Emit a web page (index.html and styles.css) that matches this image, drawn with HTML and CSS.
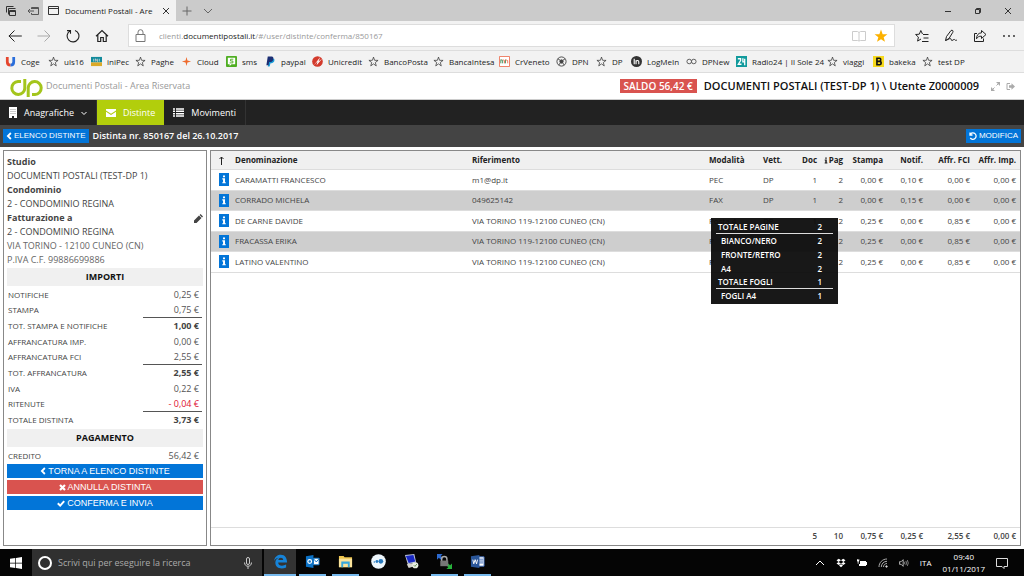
FILE: index.html
```html
<!DOCTYPE html>
<html lang="it">
<head>
<meta charset="utf-8">
<title>Documenti Postali - Area Riservata</title>
<meta name="viewport" content="width=device-width, initial-scale=1">
<link rel="stylesheet" href="styles.css">
</head>
<body>
<svg class="defs" aria-hidden="true">
  <symbol id="star" viewBox="0 0 12 12"><path d="M6 1.2 7.2 4.7 11 4.8 8 7.1 9 10.8 6 8.6 3 10.8 4 7.1 1 4.8 4.8 4.7Z" fill="none" stroke="#333" stroke-width=".8"/></symbol>
  <symbol id="info" viewBox="0 0 10 14"><path fill="currentColor" d="M3.7 2h2.6v2.2H3.7zM2.8 5.4h3.5v5h1v1.5H2.8v-1.5h1V6.9h-1z"/></symbol>
  <symbol id="chevron-left" viewBox="0 0 8 10"><path d="M6.500 1 2.500 5l4 4" fill="none" stroke="currentColor" stroke-width="2.400"/></symbol>
</svg>

<header class="browser">
  <div class="titlebar">
    <div class="tab-tools">
      <button class="icon-btn" aria-label="Schede accantonate"><svg width="12" height="12" viewBox="0 0 12 12" fill="none" stroke="#333"><path d="M1.5 7.500v-6h7M3.500 9.500v-6h7"/><path d="M4.500 5.500h6v5h-6zM4.500 6.500h6"/></svg></button>
      <button class="icon-btn" aria-label="Accantona schede"><svg width="12" height="12" viewBox="0 0 12 12" fill="none" stroke="#555"><path d="M4.500 4V2.500h7v7h-7V8M4.500 3.500h7M1 6h6M3 4 1 6l2 2"/></svg></button>
    </div>
    <div class="tab">
      <svg width="12" height="10" viewBox="0 0 12 10" fill="none" stroke="#333"><path d="M.5.500h10v8H.5zM.5 2.500h10"/></svg>
      <span class="tab-title">Documenti Postali - Are</span>
      <button class="icon-btn" aria-label="Chiudi scheda"><svg width="8" height="8" viewBox="0 0 8 8" stroke="#333"><path d="m1 1 6 6M7 1 1 7"/></svg></button>
    </div>
    <button class="icon-btn new-tab" aria-label="Nuova scheda"><svg width="10" height="10" viewBox="0 0 10 10" stroke="#666"><path d="M5 .5v9M.5 5h9"/></svg></button>
    <button class="icon-btn" aria-label="Anteprime schede"><svg width="10" height="10" viewBox="0 0 10 10" fill="none" stroke="#666"><path d="m1 3 4 4 4-4"/></svg></button>
    <div class="window-tools">
      <button class="icon-btn" aria-label="Riduci"><svg width="8" height="8" viewBox="0 0 8 8" stroke="#333"><path d="M1 4.500h6"/></svg></button>
      <button class="icon-btn" aria-label="Ripristina"><svg width="8" height="8" viewBox="0 0 8 8" fill="none" stroke="#333"><path d="M1.500 2.500h4v4h-4zM2.500 2.500v-1h4v4h-1"/></svg></button>
      <button class="icon-btn" aria-label="Chiudi"><svg width="8" height="8" viewBox="0 0 8 8" stroke="#333"><path d="m1 1 6 6M7 1 1 7"/></svg></button>
    </div>
  </div>

  <div class="toolbar">
    <nav class="history">
      <button class="icon-btn" aria-label="Indietro"><svg width="14" height="14" viewBox="0 0 14 14" fill="none" stroke="#222"><path d="M.8 7h13M6.500 1.500 1 7l5.500 5.500"/></svg></button>
      <button class="icon-btn" aria-label="Avanti"><svg width="14" height="14" viewBox="0 0 14 14" fill="none" stroke="#aaa"><path d="M.5 7h12.500M7.500 1.500 13 7l-5.500 5.500"/></svg></button>
      <button class="icon-btn" aria-label="Aggiorna"><svg width="14" height="14" viewBox="0 0 14 14" fill="none" stroke="#222" stroke-width="1.100"><path d="M9 1.400A5.900 5.900 0 1 1 4 1.900M4.500 4.800V1.600H1"/></svg></button>
      <button class="icon-btn" aria-label="Home"><svg width="14" height="14" viewBox="0 0 14 14" fill="none" stroke="#222" stroke-width="1.200"><path d="M1 7.300 7 1.500l6 5.800M2.800 6v6.500h2.900V8.500h2.600v4h2.900V6"/></svg></button>
    </nav>
    <div class="address">
      <svg width="11" height="13" viewBox="0 0 11 13" fill="none" stroke="#777"><path d="M1 5.500h9v7H1zM3 5.500V3.200a2.500 2.500 0 0 1 5 0v2.300"/></svg>
      <div class="url">clienti.<strong>documentipostali.it</strong>/#/user/distinte/conferma/850167</div>
      <button class="icon-btn" aria-label="Visualizzazione di lettura"><svg width="14" height="12" viewBox="0 0 14 12" fill="none" stroke="#ccc"><path d="M.5 1.500h5l1.500 1 1.500-1h5v9h-5L7 11l-1.500-.5h-5zM7 2.500V11"/></svg></button>
      <button class="icon-btn" aria-label="Preferito"><svg width="14" height="14" viewBox="0 0 12 12"><path fill="#fcb100" d="M6 .5 7.400 4.400 11.500 4.500 8.300 7 9.400 11 6 8.700 2.600 11 3.700 7 .5 4.500 4.600 4.400Z"/></svg></button>
    </div>
    <div class="tools">
      <button class="icon-btn" aria-label="Hub"><svg width="14" height="14" viewBox="0 0 14 14" fill="none" stroke="#222"><path d="M8 5.500H13.500M8.500 9h5M7 12.500h6.500M7.500 5 5.800 1.500 4.300 5.200.6 5.500l2.800 2.600-.8 4L6 10"/></svg></button>
      <button class="icon-btn" aria-label="Nota Web"><svg width="14" height="14" viewBox="0 0 14 14" fill="none" stroke="#222"><path d="m1.500 11.500 1-4L7 1.500c1.500-1 2.500.5 1.800 1.800L5 9.500l-3.500 2c2-.5 5-3 5.500-1.500s.5 2 2 1 1.500-.5 2 0 1 .5 2 0"/></svg></button>
      <button class="icon-btn" aria-label="Condividi"><svg width="14" height="14" viewBox="0 0 14 14" fill="none" stroke="#222"><path d="M4 4.500H1.500v8h9V9.500M8.500 1.500l4.500 4-4.500 4V7.200C6 7 4.600 8 3.500 9.800 3.600 6.500 5 4 8.500 3.800z"/></svg></button>
      <button class="icon-btn" aria-label="Altro"><svg width="14" height="14" viewBox="0 0 14 14" fill="#222"><circle cx="2" cy="7" r=".9"/><circle cx="7" cy="7" r=".9"/><circle cx="12" cy="7" r=".9"/></svg></button>
    </div>
  </div>

  <nav class="favorites">
    <a href="#"><svg viewBox="0 0 12 12" fill="none" stroke-width="3"><path d="M2.500 1v5.500c0 2 1.500 3.500 3.500 3.500" stroke="#e5452d"/><path d="M6 10c2 0 3.500-1.500 3.500-3.500V1" stroke="#2a6edb"/></svg>Coge</a>
    <a href="#"><svg><use href="#star"/></svg>uls16</a>
    <a href="#"><svg viewBox="0 0 12 12"><path fill="#128a9b" d="M0 1h12v6H0z"/><path fill="#dba928" d="M0 7h12v4H0z"/><path stroke="#fff" stroke-width=".7" d="M3 3v3M5 6V3l2 3V3M9 3v3"/></svg>iniPec</a>
    <a href="#"><svg><use href="#star"/></svg>Paghe</a>
    <a href="#"><svg viewBox="0 0 12 12"><path fill="#ee6b2d" d="m6 1 1 4 4 1-4 1-1 4-1-4-4-1 4-1z"/></svg>Cloud</a>
    <a href="#"><svg viewBox="0 0 12 12"><rect width="12" height="12" rx="1" fill="#4fae22"/><path d="M2 2h8v7H6l-2 2V9H2z" fill="#fff"/><path d="M8 3.500H5v2h2.500v2H4" fill="none" stroke="#4fae22"/></svg>sms</a>
    <a href="#"><svg viewBox="0 0 12 12"><path fill="#179bd7" d="M5 3h5c1 3-1 5-4 5l-1 3.500H3z"/><path fill="#1c2f74" d="M3 .5h4.500C10 .5 10 6 6 6.500H4.500L4 10H1.500z"/></svg>paypal</a>
    <a href="#"><svg viewBox="0 0 12 12"><circle cx="6" cy="6" r="5.800" fill="#d33a2c"/><path d="M2 10 9 1l-2 5 4-3-6 7 1-4z" fill="#fff"/></svg>Unicredit</a>
    <a href="#"><svg><use href="#star"/></svg>BancoPosta</a>
    <a href="#"><svg><use href="#star"/></svg>BancaIntesa</a>
    <a href="#"><svg viewBox="0 0 12 12" fill="none"><path fill="#fff" stroke="#ec7357" d="M.5.500h11v11H.5z"/><path stroke="#3c8b54" d="M2 8V4l2 1v3M7 8V4"/><path stroke="#ec7357" d="M4 4l2 1v3M7 4l2.500 1v3"/></svg>CrVeneto</a>
    <a href="#"><svg viewBox="0 0 12 12" fill="none" stroke="#444"><circle cx="6" cy="6" r="5"/><circle cx="6" cy="6" r="1.800" fill="#444"/><path d="m2 3 3 2M10 3 7 5M3 10l2-3M9 10 7 7"/></svg>DPN</a>
    <a href="#"><svg><use href="#star"/></svg>DP</a>
    <a href="#"><svg viewBox="0 0 12 12" fill="none" stroke="#fff" stroke-width="1.200"><circle cx="6" cy="6" r="6" fill="#333" stroke="none"/><path d="M3.500 3v6M5.500 9V4.500M5.500 6c.5-1.500 3-1.500 3 .3V9"/></svg>LogMeIn</a>
    <a href="#"><svg viewBox="0 0 12 12" fill="none" stroke="#555"><circle cx="3.500" cy="6" r="2.500"/><circle cx="8.500" cy="6" r="2.500"/></svg>DPNew</a>
    <a href="#"><svg viewBox="0 0 12 12" fill="none" stroke="#fff" stroke-width="1.400"><path fill="#119a9c" stroke="none" d="M0 0h12v12H0z"/><path d="M2 3h3v2L2.500 9H6M7.500 2.500v4H10M9.500 3v7"/></svg>Radio24 | Il Sole 24</a>
    <a href="#"><svg><use href="#star"/></svg>viaggi</a>
    <a href="#"><svg viewBox="0 0 12 12"><path fill="#f6d91c" d="M0 0h12v12H0z"/><path fill="none" stroke="#111" stroke-width="1.800" d="M3.500 2.500h3.800c1.500 0 1.500 3 0 3.300H4h3.500c2 .2 1.800 3.700 0 3.700H3.500M4.300 2v8"/></svg>bakeka</a>
    <a href="#"><svg><use href="#star"/></svg>test DP</a>
  </nav>
</header>

<div class="brand-bar">
  <svg class="logo" width="35" height="18" viewBox="0 0 35 18" fill="none" stroke="#a4c51c" stroke-width="3"><path d="M12 2.500H9A6.500 6.500 0 1 0 15.800 9V0"/><path d="M23 15.500h3A6.500 6.500 0 1 0 19.200 9v9"/></svg>
  <span class="brand-name">Documenti Postali - Area Riservata</span>
  <span class="balance">SALDO 56,42 €</span>
  <strong class="account">DOCUMENTI POSTALI (TEST-DP 1) \ Utente Z0000009</strong>
  <button class="icon-btn" aria-label="Schermo intero"><svg width="9" height="9" viewBox="0 0 9 9" stroke="#aaa" fill="#aaa"><path stroke="none" d="M5 0h4v4zM0 5v4h4z"/><path d="m1 8 2.500-2.500M8 1 5.500 3.500"/></svg></button>
  <button class="icon-btn" aria-label="Esci"><svg width="9" height="9" viewBox="0 0 9 9" fill="none" stroke="#aaa"><path d="M4 1.500H1v6h3"/><path fill="#aaa" stroke="none" d="M3 3.200h2.500V1.200L9 4.500 5.500 7.800v-2H3z"/></svg></button>
</div>

<nav class="main-nav">
  <a href="#"><svg width="8" height="11" viewBox="0 0 8 11"><path fill="#fff" d="M0 0h8v11H5V9H3v2H0z"/><path stroke="#999" stroke-dasharray="1 1" d="M1.500 2.500h5M1.500 4.500h5M1.500 6.500h5"/></svg>Anagrafiche<svg class="caret" width="6" height="6" viewBox="0 0 6 6" fill="none" stroke="#fff"><path d="m.5 2 2.500 2.500L5.500 2"/></svg></a>
  <a href="#" class="active"><svg width="10" height="8" viewBox="0 0 10 8" fill="#fff"><path d="M0 0h10v1.500L5 4.800 0 1.500zM0 2.800l5 3.300 5-3.300V8H0z"/></svg>Distinte</a>
  <a href="#"><svg width="11" height="9" viewBox="0 0 11 9" stroke="#fff" stroke-width="1.500"><path d="M0 1h2M3 1h8M0 3.300h2M3 3.300h8M0 5.700h2M3 5.700h8M0 8h2M3 8h8"/></svg>Movimenti</a>
</nav>

<div class="page-bar">
  <button class="btn"><svg width="6" height="8"><use href="#chevron-left"/></svg>ELENCO DISTINTE</button>
  <h1>Distinta nr. 850167 del 26.10.2017</h1>
  <button class="btn edit"><svg width="8" height="8" viewBox="0 0 8 8" fill="none" stroke="#fff" stroke-width="1.300"><path d="M1.500 2A3.200 3.200 0 1 1 1.300 6M1 .5V3h2.500"/></svg>MODIFICA</button>
</div>

<main class="content">
  <aside class="summary panel">
    <dl class="parties">
      <dt>Studio</dt>
      <dd>DOCUMENTI POSTALI (TEST-DP 1)</dd>
      <dt>Condominio</dt>
      <dd>2 - CONDOMINIO REGINA</dd>
      <dt class="billing">Fatturazione a
        <button class="icon-btn" aria-label="Modifica fatturazione"><svg width="9" height="9" viewBox="0 0 9 9"><path fill="#444" d="M0 9V6.500L5 1.500 7.500 4l-5 5zM5.600 1 6.600 0 9 2.400l-1 1z"/></svg></button></dt>
      <dd>2 - CONDOMINIO REGINA</dd>
      <dd class="light">VIA TORINO - 12100 CUNEO (CN)</dd>
      <dd class="light">P.IVA C.F. 99886699886</dd>
    </dl>
    <h2>IMPORTI</h2>
    <dl class="amounts">
      <div><dt>NOTIFICHE</dt><dd>0,25 €</dd></div>
      <div><dt>STAMPA</dt><dd>0,75 €</dd></div>
      <div class="total"><dt>TOT. STAMPA E NOTIFICHE</dt><dd>1,00 €</dd></div>
      <div><dt>AFFRANCATURA IMP.</dt><dd>0,00 €</dd></div>
      <div><dt>AFFRANCATURA FCI</dt><dd>2,55 €</dd></div>
      <div class="total"><dt>TOT. AFFRANCATURA</dt><dd>2,55 €</dd></div>
      <div><dt>IVA</dt><dd>0,22 €</dd></div>
      <div><dt>RITENUTE</dt><dd class="negative">- 0,04 €</dd></div>
      <div class="total"><dt>TOTALE DISTINTA</dt><dd>3,73 €</dd></div>
    </dl>
    <h2>PAGAMENTO</h2>
    <dl class="amounts">
      <div><dt>CREDITO</dt><dd>56,42 €</dd></div>
    </dl>
    <div class="actions">
      <button class="btn"><svg width="6" height="8"><use href="#chevron-left"/></svg>TORNA A ELENCO DISTINTE</button>
      <button class="btn danger"><svg width="7" height="7" viewBox="0 0 7 7" stroke="#fff" stroke-width="2.200"><path d="m1 1 5 5M6 1 1 6"/></svg>ANNULLA DISTINTA</button>
      <button class="btn"><svg width="8" height="7" viewBox="0 0 8 7" fill="none" stroke="#fff" stroke-width="2"><path d="m.8 3.200 2.400 2.400 4-4.400"/></svg>CONFERMA E INVIA</button>
    </div>
  </aside>

  <section class="grid panel">
    <table>
      <colgroup><col class="c-info"><col><col><col class="c-mode"><col class="c-vett"><col class="c-doc"><col class="c-pag"><col class="c-stampa"><col class="c-notif"><col class="c-fci"><col class="c-imp"></colgroup>
      <thead>
        <tr><th class="sort"><svg width="7" height="9" viewBox="0 0 7 9" fill="none" stroke="#222"><path d="M3.500 9V1M1.500 3 3.500 1l2 2"/></svg></th><th>Denominazione</th><th>Riferimento</th><th>Modalità</th><th>Vett.</th><th class="num">Doc</th><th class="num"><svg width="6" height="9"><use href="#info"/></svg>Pag</th><th class="num">Stampa</th><th class="num">Notif.</th><th class="num">Affr. FCI</th><th class="num">Affr. Imp.</th></tr>
      </thead>
      <tbody>
        <tr><td><button class="info" aria-label="Dettagli"><svg width="8" height="11"><use href="#info"/></svg></button></td><td>CARAMATTI FRANCESCO</td><td>m1@dp.it</td><td>PEC</td><td>DP</td><td class="num">1</td><td class="num">2</td><td class="num">0,00 €</td><td class="num">0,10 €</td><td class="num">0,00 €</td><td class="num">0,00 €</td></tr>
        <tr><td><button class="info" aria-label="Dettagli"><svg width="8" height="11"><use href="#info"/></svg></button></td><td>CORRADO MICHELA</td><td>049625142</td><td>FAX</td><td>DP</td><td class="num">1</td><td class="num">2</td><td class="num">0,00 €</td><td class="num">0,15 €</td><td class="num">0,00 €</td><td class="num">0,00 €</td></tr>
        <tr><td><button class="info" aria-label="Dettagli"><svg width="8" height="11"><use href="#info"/></svg></button></td><td>DE CARNE DAVIDE</td><td>VIA TORINO 119-12100 CUNEO (CN)</td><td>Posta 4</td><td>DP</td><td class="num">1</td><td class="num">2</td><td class="num">0,25 €</td><td class="num">0,00 €</td><td class="num">0,85 €</td><td class="num">0,00 €</td></tr>
        <tr><td><button class="info" aria-label="Dettagli"><svg width="8" height="11"><use href="#info"/></svg></button></td><td>FRACASSA ERIKA</td><td>VIA TORINO 119-12100 CUNEO (CN)</td><td>P</td><td></td><td class="num"></td><td class="num">2</td><td class="num">0,25 €</td><td class="num">0,00 €</td><td class="num">0,85 €</td><td class="num">0,00 €</td></tr>
        <tr><td><button class="info" aria-label="Dettagli"><svg width="8" height="11"><use href="#info"/></svg></button></td><td>LATINO VALENTINO</td><td>VIA TORINO 119-12100 CUNEO (CN)</td><td>P</td><td></td><td class="num"></td><td class="num">2</td><td class="num">0,25 €</td><td class="num">0,00 €</td><td class="num">0,85 €</td><td class="num">0,00 €</td></tr>
      </tbody>
    </table>
    <table class="totals">
      <colgroup><col class="c-info"><col><col><col class="c-mode"><col class="c-vett"><col class="c-doc"><col class="c-pag"><col class="c-stampa"><col class="c-notif"><col class="c-fci"><col class="c-imp"></colgroup>
      <tbody><tr><td colspan="5"></td><td class="num">5</td><td class="num">10</td><td class="num">0,75 €</td><td class="num">0,25 €</td><td class="num">2,55 €</td><td class="num">0,00 €</td></tr></tbody>
    </table>
    <div class="tooltip" role="tooltip">
      <dl>
        <div class="group"><dt>TOTALE PAGINE</dt><dd>2</dd></div>
        <div><dt>BIANCO/NERO</dt><dd>2</dd></div>
        <div><dt>FRONTE/RETRO</dt><dd>2</dd></div>
        <div><dt>A4</dt><dd>2</dd></div>
        <div class="group"><dt>TOTALE FOGLI</dt><dd>1</dd></div>
        <div><dt>FOGLI A4</dt><dd>1</dd></div>
      </dl>
    </div>
  </section>
</main>

<footer class="taskbar">
  <button class="start" aria-label="Start"><svg width="12" height="12" viewBox="0 0 12 12" fill="#fff"><path d="M0 1.700 5.300 1v4.700H0zM6 .9 12 0v5.700H6zM0 6.400h5.300V11L0 10.300zM6 6.400h6V12l-6-.9z"/></svg></button>
  <label class="search">
    <svg width="16" height="16" viewBox="0 0 16 16" fill="none" stroke="#fff" stroke-width="2"><circle cx="8" cy="8" r="6"/></svg>
    <input type="text" placeholder="Scrivi qui per eseguire la ricerca" aria-label="Cerca">
    <svg width="8" height="12" viewBox="0 0 8 12" fill="none" stroke="#ccc"><rect x="2.500" y=".5" width="3" height="7" rx="1.500"/><path d="M.5 5.500c0 5 7 5 7 0M4 9.500V12"/></svg>
  </label>
  <div class="apps">
    <button class="app running current" aria-label="Edge"><svg viewBox="0 0 16 16"><path fill="#1683d8" d="M1 7.500C2 2.500 5 .8 8.300.8 13 .8 15 4.500 15 9H5.500c.2 4 5 4.200 8.500 2.200v3.200c-5 2.300-11.500 1-11.500-5C2.500 6.500 4 4.800 6 4 4 4 2 5.500 1 7.500zM5.700 6.500h5.200C10.800 3 6 3.200 5.700 6.500z"/></svg></button>
    <button class="app running" aria-label="Outlook"><svg viewBox="0 0 16 16"><path fill="#0c72c6" d="m1 2.500 8-1.500v14l-8-1.500z"/><circle cx="5" cy="8" r="2" fill="none" stroke="#fff" stroke-width="1.300"/><path fill="#fff" stroke="#0c72c6" d="M9 4.500h6v7H9z"/><path fill="none" stroke="#0c72c6" d="m9.500 5.500 2.500 3 3-3.500"/></svg></button>
    <button class="app running" aria-label="Esplora file"><svg viewBox="0 0 16 16"><path fill="#f0c64e" d="M1 2h5l1 1.500h8V14H1z"/><path fill="#fbe39b" d="M1 5h14v9H1z"/><path fill="#36a7dc" d="M3.500 8h9v6h-2v-3.500h-5V14h-2z"/></svg></button>
    <button class="app" aria-label="Assistenza remota"><svg viewBox="0 0 16 16"><circle cx="8" cy="8" r="7.800" fill="#eef7fc"/><circle cx="10.500" cy="7.800" r="2.500" fill="#2779bd"/><circle cx="6.300" cy="8" r="1.500" fill="#2779bd"/><circle cx="3.500" cy="8.500" r=".8" fill="#2779bd"/></svg></button>
    <button class="app" aria-label="Desktop remoto"><svg viewBox="0 0 16 16"><path fill="#b9c2d8" d="m1 1 10-1 2 9-9 2z"/><path fill="#1828c4" d="m2 2 8-1 2 7-7 1.500z"/><path fill="#d5d5cf" d="m3 11 8-1.500 2 3-8 2.500z"/><circle cx="12" cy="12" r="3.300" fill="#e9eee4"/><path d="m10.500 12 1.200 1.200 2-2.500" fill="none" stroke="#5d8b4a"/></svg></button>
    <button class="app running" aria-label="VPN"><svg viewBox="0 0 16 16"><path fill="#2d6bd1" d="M0 0h6L4 2l2 2-2 2-2-2-2 2z"/><path fill="#27b13b" d="M16 16h-6l2-2-2-2 2-2 2 2 2-2z"/><path d="M5 8V5.500a2.800 2.800 0 0 1 5.600 0V8" fill="none" stroke="#aaa" stroke-width="1.500"/><path fill="#777" d="M3.500 7h8.500v6H3.500z"/></svg></button>
    <button class="app running" aria-label="Word"><svg viewBox="0 0 16 16"><path fill="#fff" stroke="#3a68b5" d="M8 3h7v10H8z"/><path stroke="#3a68b5" d="M9 5.500h5M9 7.500h5M9 9.500h5"/><path fill="#2a5699" d="m1 2.500 9-1.500v14l-9-1.500z"/><path d="m3 6 1 4.500L5.500 6 7 10.500 8 6" fill="none" stroke="#fff"/></svg></button>
  </div>
  <div class="tray">
    <svg viewBox="0 0 10 10" fill="none" stroke="#fff"><path d="m1 7 4-4 4 4"/></svg>
    <svg viewBox="0 0 10 10" fill="#fff"><path d="m2.800.8 2.200 1.500-2.500 1.600L.5 2.300zM7.200.8 5 2.300l2.500 1.600 2-1.600zM2.500 4 5 5.600 2.800 7.100.5 5.500zM7.500 4 5 5.600l2.200 1.500 2.300-1.600zM5 6.200l2 1.400-2 1.600-2-1.600z"/></svg>
    <svg viewBox="0 0 10 10" fill="#fff"><path d="M3 3h6v1h1v3H9v1H2V6h1zM0 1h.7v1h.8V1h.7v2l-.7.700v2H.7v-2L0 3z"/></svg>
    <svg viewBox="0 0 10 10" fill="none" stroke="#bbb" stroke-width=".9"><path d="M1 9C1 4.500 4.500 1 9 1M3.300 9C3.300 5.800 5.800 3.300 9 3.300M5.500 9C5.500 7 7 5.500 9 5.500"/><circle cx="8.500" cy="8.500" r=".8" fill="#fff"/></svg>
    <svg viewBox="0 0 12 10" fill="none" stroke="#bbb" stroke-width=".8"><path stroke="#fff" d="M.5 3.500h2l2.500-2.500v8L2.500 6.500h-2z"/><path d="M6.500 3.500q1 1.500 0 3M8.200 2.500q1.700 2.500 0 5M10 1.500q2.200 3.500 0 7"/></svg>
    <span class="lang">ITA</span>
    <div class="clock"><span>09:40</span><span>01/11/2017</span></div>
    <svg class="notice" viewBox="0 0 12 12" fill="none" stroke="#ddd"><path d="M.5 1.500h11v8H8v2l-2-2H.5z"/></svg>
  </div>
</footer>
</body>
</html>
```
FILE: styles.css
```css
* { box-sizing: border-box; }

body {
  margin: 0;
  min-height: 100vh;
  display: flex;
  flex-direction: column;
  background: #fff;
  color: #444;
  font-family: "Open Sans", "Noto Sans", sans-serif;
  font-size: 8px;
  line-height: 12px;
}

button { font: inherit; border: 0; padding: 0; margin: 0; background: none; color: inherit; }
a { color: inherit; text-decoration: none; }
svg { display: block; flex: none; }
dl, dt, dd, h1, h2 { margin: 0; padding: 0; }
.defs { position: absolute; width: 0; height: 0; }
.icon-btn { display: flex; align-items: center; justify-content: center; }

/* Browser chrome */
.titlebar { display: flex; align-items: center; height: 21px; background: #cbcbcb; }
.tab-tools { display: flex; gap: 10px; width: 43px; padding-left: 5px; }
.tab {
  display: flex;
  align-items: center;
  gap: 5px;
  width: 133px;
  height: 21px;
  padding-left: 5px;
  background: #f2f2f2;
  color: #222;
  font-size: 8px;
}
.tab-title { flex: 1; white-space: nowrap; }
.tab .icon-btn { margin-right: 6px; }
.new-tab { margin: 0 11px 0 6px; }
.window-tools { display: flex; gap: 22px; margin-left: auto; padding-right: 12px; }

.toolbar {
  display: flex;
  align-items: center;
  height: 30px;
  background: #f2f2f2;
  border-bottom: 1px solid #ddd;
}
.history { display: flex; gap: 15px; width: 128px; padding-left: 8px; }
.address {
  flex: 1;
  display: flex;
  align-items: center;
  gap: 8px;
  height: 23px;
  padding: 0 6px;
  background: #fff;
  border: 1px solid #ddd;
}
.url { flex: 1; padding-left: 5px; color: #999; font-size: 8px; white-space: nowrap; }
.url strong { color: #222; font-weight: 400; }
.tools { display: flex; gap: 15px; padding: 0 8px 0 20px; }

.favorites {
  display: grid;
  grid-template-columns: 43px 43px 44px 46px 45px 39px 47px 56px 65px 66px 57px 40px 35px 55px 50px 91px 46px 49px auto;
  align-items: center;
  height: 22px;
  padding-left: 5px;
  background: #f2f2f2;
  border-bottom: 1px solid #ddd;
  color: #222;
  white-space: nowrap;
}
.favorites a { display: flex; align-items: center; gap: 5px; }
.favorites svg { width: 11px; height: 11px; }

/* Site header */
.brand-bar { display: flex; align-items: center; height: 27px; padding: 0 9px; border-bottom: 1px solid #ccc; }
.logo { margin-top: 4px; }
.brand-name { flex: 1; margin-left: 2px; color: #999; font-size: 9px; }
.balance { padding: 0 4px; background: #d9534f; color: #fff; font-size: 10px; font-weight: 600; line-height: 14px; }
.account { margin: 0 12px 0 7px; color: #111; font-size: 11px; font-weight: 600; }
.brand-bar .icon-btn + .icon-btn { margin-left: 6px; }

.main-nav { display: flex; height: 25px; background: #222; color: #fff; font-size: 9px; }
.main-nav a { display: flex; align-items: center; gap: 7px; padding: 0 9px; border-right: 1px solid #333; }
.main-nav .active { background: #b2ce0c; border: 0; }

.page-bar { display: flex; align-items: center; gap: 4px; height: 22px; padding: 0 3px; background: #444; }
.page-bar h1 { color: #fff; font-size: 9px; font-weight: 600; line-height: 12px; }
.page-bar .edit { margin-left: auto; }
.btn {
  display: flex;
  align-items: center;
  justify-content: center;
  gap: 2px;
  height: 14px;
  padding: 0 3px;
  background: #0275d8;
  color: #fff;
  font-family: "Liberation Sans", Arial, sans-serif;
  font-size: 8px;
}
.btn.danger { background: #d9534f; }

/* Panels */
.content { flex: 1; display: flex; gap: 3px; padding: 3px; }
.panel { border: 1px solid #888; background: #fff; }

.summary { width: 204px; padding: 4px 3px; }
.parties { padding-bottom: 1px; font-size: 9px; line-height: 14px; }
.parties dt { font-weight: 700; }
.parties .light { color: #666; }
.billing { display: flex; align-items: center; justify-content: space-between; }
.summary h2 {
  background: #f0f0f0;
  color: #111;
  font-size: 9px;
  line-height: 18px;
  text-align: center;
}
.amounts { padding: 1px 0; }
.amounts div { display: flex; align-items: flex-end; justify-content: space-between; padding: 0 1px; line-height: 14px; }
.amounts .total { line-height: 16px; }
.amounts dd { width: 59px; padding-right: 3px; border-top: 1px solid transparent; font-size: 9px; text-align: right; color: #555; }
.amounts .total dd { border-color: #555; font-weight: 700; color: #444; }
.amounts .negative { color: #e01030; }
.actions { display: grid; gap: 2px; }
.actions .btn { font-size: 9px; }

.grid { position: relative; flex: 1; display: flex; flex-direction: column; justify-content: space-between; }
table { width: 100%; table-layout: fixed; border-collapse: collapse; }
.c-info { width: 21px; }
.c-mode { width: 54px; }
.c-vett { width: 30px; }
.c-doc { width: 27px; }
.c-pag { width: 26px; }
.c-stampa, .c-notif { width: 40px; }
.c-fci { width: 47px; }
.c-imp { width: 50px; }
th, td { padding: 0 0 0 3px; text-align: left; white-space: nowrap; }
th { color: #222; font-weight: 700; }
th svg { display: inline-block; vertical-align: middle; }
.num { padding: 0; text-align: right; }
.num:last-child { padding-right: 4px; }
thead tr { height: 18px; background: #f0f0f0; border-bottom: 1px solid #ddd; }
.sort { padding-left: 7px; }
tbody tr { height: 21px; border-bottom: 1px solid #ddd; }
tbody tr:nth-child(even) { height: 20px; background: #cecece; }
.info { display: flex; align-items: center; justify-content: center; width: 10px; height: 13px; margin-left: 5px; background: #0275d8; color: #fff; }
.totals tr { height: 18px; border-top: 1px solid #ddd; border-bottom: 0; }
.totals td { font-weight: 600; }

.tooltip {
  position: absolute;
  top: 67px;
  right: 182px;
  width: 127px;
  padding: 3px 5px 1px;
  background: rgba(10, 10, 10, .94);
  color: #fff;
  font-weight: 600;
}
.tooltip dl div { display: flex; justify-content: space-between; padding: 0 11px 0 5px; line-height: 14px; }
.tooltip dl .group { padding-left: 2px; line-height: 12px; border-bottom: 1px solid #ddd; }

/* Taskbar */
.taskbar { display: flex; align-items: stretch; height: 27px; background: #050505; color: #fff; }
.start { display: flex; align-items: center; justify-content: center; width: 32px; }
.search { display: flex; align-items: center; width: 230px; padding: 0 10px 0 5px; background: #303030; }
.search input { flex: 1; min-width: 0; padding: 0 0 0 5px; border: 0; background: none; color: #fff; font: inherit; font-size: 9px; }
.search input::placeholder { color: #aaa; opacity: 1; }
.apps { display: flex; gap: 6px; margin-left: 2px; }
.app { display: flex; align-items: center; justify-content: center; width: 27px; border-bottom: 2px solid transparent; }
.app svg { width: 15px; height: 15px; }
.running { border-color: #76b9ed; }
.current { width: 32px; margin-right: -3px; background: #333; }
.tray { display: flex; align-items: center; gap: 11px; margin-left: auto; padding-right: 16px; }
.tray svg { width: 10px; height: 10px; }
.clock { display: grid; text-align: center; }
.tray .notice { width: 12px; height: 12px; }
```
